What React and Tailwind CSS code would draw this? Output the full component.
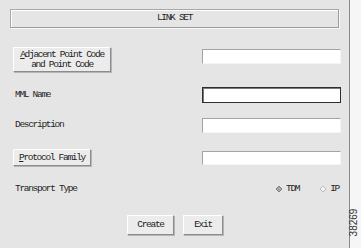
const font = { fontFamily: '"Liberation Mono", "DejaVu Sans Mono", monospace' };

function Mnemonic({ text }) {
  return (
    <span>
      <span className="underline underline-offset-1">{text[0]}</span>
      {text.slice(1)}
    </span>
  );
}

function RaisedButton({ children, className = '' }) {
  return (
    <button
      className={`flex flex-col items-center justify-center border border-t-white border-l-white border-b-[#8c8c8c] border-r-[#8c8c8c] bg-[#ececec] text-[#222] shadow-[1px_1px_0_#b5b5b5] ${className}`}
    >
      {children}
    </button>
  );
}

function Field({ focused = false, className = '' }) {
  const border = focused
    ? 'border border-[#2e2e2e] shadow-[inset_1px_1px_0_#7a7a7a]'
    : 'border border-t-[#a3a3a3] border-l-[#a3a3a3] border-b-[#f4f4f4] border-r-[#f4f4f4]';
  return <div className={`ml-auto mr-[8px] w-[139px] bg-white ${border} ${className}`} />;
}

function Diamond({ filled }) {
  return (
    <svg width="8" height="8" viewBox="0 0 8 8">
      <polygon
        points="4,1 7,4 4,7 1,4"
        fill={filled ? '#a8a8a8' : '#f3f3f3'}
        stroke={filled ? '#808080' : '#bdbdbd'}
        strokeWidth="1"
      />
    </svg>
  );
}

export default function App() {
  return (
    <div className="flex h-[248px] w-[361px] overflow-hidden bg-[#e5e5e5] text-[9.5px] tracking-[-1.3px] text-[#1f1f1f]" style={font}>
      <div className="flex w-[349px] flex-col">
        <div className="mx-[10px] mt-[9px] flex h-[19px] items-center justify-center border border-t-[#a8a8a8] border-l-[#a8a8a8] border-b-[#9c9c9c] border-r-[#9c9c9c] shadow-[inset_1px_1px_0_#ffffff,1px_1px_0_#f7f7f7]">
          LINK SET
        </div>

        <div className="mt-[19px] flex h-[25px] items-start pl-[13px]">
          <RaisedButton className="h-[25px] w-[98px] leading-[10px]">
            <span><Mnemonic text="Adjacent Point Code" /></span>
            <span>and Point Code</span>
          </RaisedButton>
          <Field className="mt-[2px] h-[15px]" />
        </div>

        <div className="mt-[15px] flex h-[16px] items-center pl-[15px]">
          <span>MML Name</span>
          <Field focused className="h-[16px]" />
        </div>

        <div className="mt-[15px] flex h-[15px] items-center pl-[15px]">
          <span>Description</span>
          <Field className="h-[15px]" />
        </div>

        <div className="mt-[16px] flex h-[17px] items-center pl-[13px]">
          <RaisedButton className="h-[17px] w-[78px] leading-[10px]">
            <Mnemonic text="Protocol Family" />
          </RaisedButton>
          <Field className="h-[14px]" />
        </div>

        <div className="mt-[17px] flex h-[12px] items-center pl-[15px]">
          <span>Transport Type</span>
          <div className="ml-auto mr-[10px] flex items-center">
            <Diamond filled />
            <span className="ml-[3px]">TDM</span>
            <span className="ml-[20px]"><Diamond /></span>
            <span className="ml-[3px]">IP</span>
          </div>
        </div>

        <div className="mt-[20px] flex justify-center gap-[9px] pl-[1px]">
          <RaisedButton className="h-[20px] w-[47px] leading-[10px]">Create</RaisedButton>
          <RaisedButton className="h-[20px] w-[40px] leading-[10px]">Exit</RaisedButton>
        </div>
      </div>

      <div className="w-px bg-[#8a8a8a]" />

      <div className="relative flex-1 bg-[#f6f6f6]">
        <span
          className="absolute bottom-[18px] left-[-10px] -rotate-90 text-[10px] tracking-normal text-[#333]"
          style={{ fontFamily: '"Liberation Sans", Arial, sans-serif' }}
        >
          38269
        </span>
      </div>
    </div>
  );
}
